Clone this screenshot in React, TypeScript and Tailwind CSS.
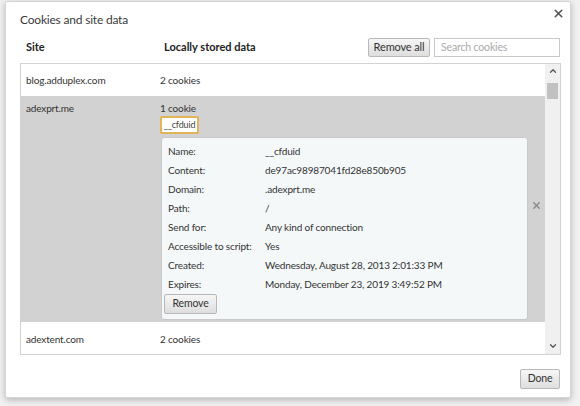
import { X, ChevronUp, ChevronDown } from "lucide-react";

const font = { fontFamily: 'Lato, "Noto Sans", sans-serif' };

const details: [string, string][] = [
  ["Name:", "__cfduid"],
  ["Content:", "de97ac98987041fd28e850b905"],
  ["Domain:", ".adexprt.me"],
  ["Path:", "/"],
  ["Send for:", "Any kind of connection"],
  ["Accessible to script:", "Yes"],
  ["Created:", "Wednesday, August 28, 2013 2:01:33 PM"],
  ["Expires:", "Monday, December 23, 2019 3:49:52 PM"],
];

function Row({ site, data }: { site: string; data: string }) {
  return (
    <div className="flex h-[32px] items-center bg-white pt-[2px]">
      <div className="w-[139px] pl-[5px] text-[#333]">{site}</div>
      <div className="text-[#333]">{data}</div>
    </div>
  );
}

export default function App() {
  return (
    <div
      className="w-[580px] h-[406px] bg-[#f1f1f1] pl-[5px] pt-[1px] overflow-hidden text-[10px] tracking-[-0.15px] whitespace-nowrap"
      style={font}
    >
      <div className="relative w-[566px] h-[397px] bg-white border border-[#d6d6d6] shadow-[0_2px_6px_rgba(0,0,0,0.25)] rounded-[2px] flex flex-col px-[14px]">
        <button className="absolute right-[5px] top-[5px] text-[#555]">
          <X className="w-[13px] h-[13px]" strokeWidth={3} />
        </button>
        <div className="h-[27px] flex items-end text-[12px] tracking-[-0.2px] text-[#3a3a3a]">
          Cookies and site data
        </div>
        <div className="h-[34px] flex items-center pt-[2px]">
          <div className="w-[144px] pl-[6px] font-bold text-[#222] text-[11px] tracking-normal">Site</div>
          <div className="flex-1 font-bold text-[#222] text-[11px] tracking-normal">Locally stored data</div>
          <button className="h-[19px] w-[62px] border border-[#b8b8b8] rounded-[2px] bg-gradient-to-b from-[#f6f6f6] to-[#dedede] text-[#333] text-[11px]">
            Remove all
          </button>
          <input
            placeholder="Search cookies"
            className="ml-[4px] h-[19px] w-[126px] mr-[-4px] border border-[#c8c8c8] px-[6px] text-[10.5px] placeholder:text-[#aaa] outline-none"
          />
        </div>
        <div className="h-[292px] w-[541px] border border-[#d2d2d2] flex">
          <div className="flex-1 flex flex-col">
            <Row site="blog.adduplex.com" data="2 cookies" />
            <div className="h-[228px] bg-[#d2d2d2] flex">
              <div className="w-[139px] pl-[5px] pt-[5px] text-[#333]">adexprt.me</div>
              <div className="flex-1 pt-[5px] flex flex-col">
                <div className="text-[#333]">1 cookie</div>
                <div className="w-[39px] h-[18px] border-2 border-[#e3b45a] rounded-[2px] bg-white text-[9px] text-[#444] flex items-center justify-center">
                  __cfduid
                </div>
                <div className="flex items-start">
                  <div className="mt-[3px] ml-[1px] w-[367px] h-[183px] bg-[#f5f8f9] border border-[#c9c9c9] rounded-[3px] px-[6px] pt-[4px]">
                    {details.map(([k, v]) => (
                      <div key={k} className="flex h-[19px] items-center text-[#333]">
                        <div className="w-[97px]">{k}</div>
                        <div>{v}</div>
                      </div>
                    ))}
                    <button className="-ml-[4px] h-[20px] w-[53px] border border-[#b8b8b8] rounded-[2px] bg-gradient-to-b from-[#f6f6f6] to-[#dedede] text-[#333] text-[10.5px]">
                      Remove
                    </button>
                  </div>
                  <div className="flex-1 flex justify-center pt-[66px] text-[#888]">
                    <X className="w-[11px] h-[11px]" strokeWidth={3} />
                  </div>
                </div>
              </div>
            </div>
            <Row site="adextent.com" data="2 cookies" />
          </div>
          <div className="w-[15px] bg-[#f0f0f0] flex flex-col items-center">
            <ChevronUp className="w-[10px] h-[10px] mt-[2px] text-[#555]" strokeWidth={3} />
            <div className="mt-[7px] w-[11px] h-[16px] bg-[#c1c1c1]" />
            <div className="flex-1" />
            <ChevronDown className="w-[10px] h-[10px] mb-[3px] text-[#555]" strokeWidth={3} />
          </div>
        </div>
        <div className="flex-1 flex justify-end items-start pt-[14px]">
          <button className="h-[20px] w-[40px] border border-[#b8b8b8] rounded-[2px] bg-gradient-to-b from-[#f6f6f6] to-[#dedede] text-[#333] text-[10.5px] -mr-[4px]">
            Done
          </button>
        </div>
      </div>
    </div>
  );
}
